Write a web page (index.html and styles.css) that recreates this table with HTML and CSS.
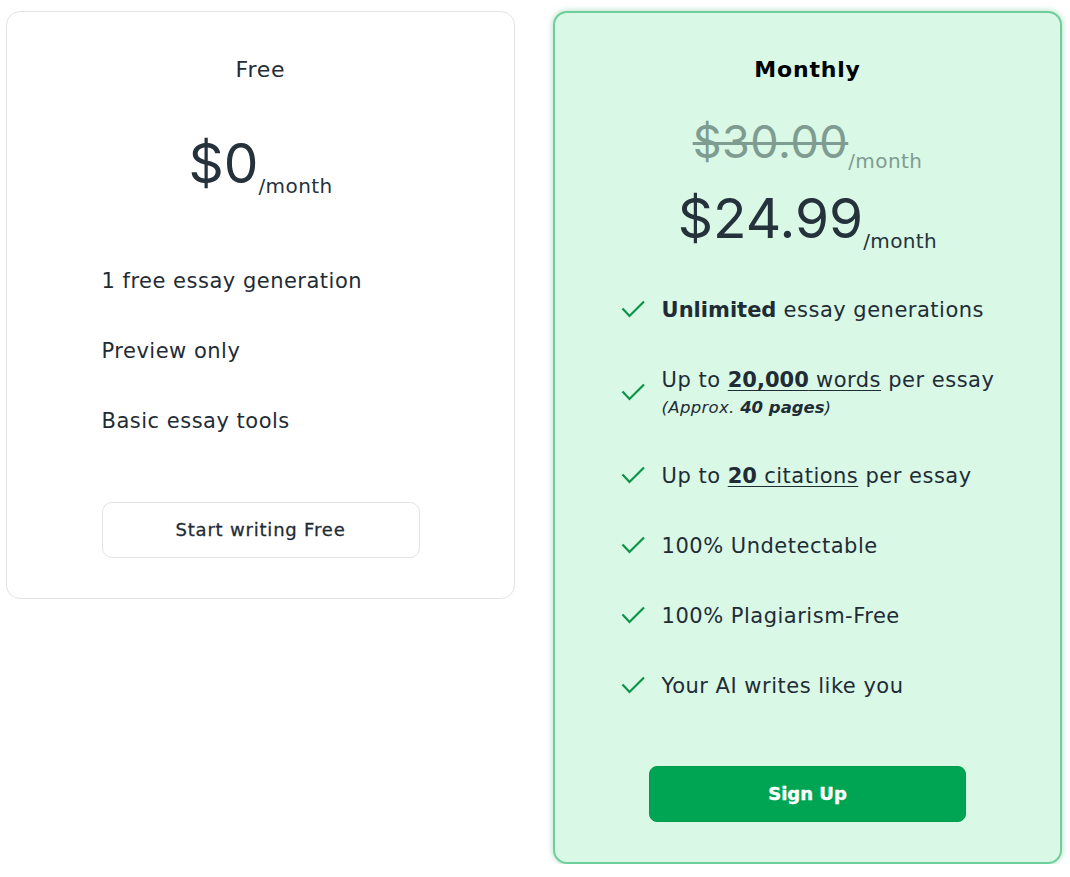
FILE: index.html
```html
<!DOCTYPE html>
<html lang="en">
<head>
  <meta charset="UTF-8">
  <meta name="viewport" content="width=device-width, initial-scale=1.0">
  <title>Pricing</title>
  <link rel="stylesheet" href="styles.css">
</head>
<body>
  <div id="plans">
    <!-- Free plan -->
    <div class="plan plan-free">
      <h3 class="plan-name">Free</h3>
      <p class="price">$0<span class="per">/month</span></p>
      <div class="plan-body">
        <ul class="features">
          <li>1 free essay generation</li>
          <li>Preview only</li>
          <li>Basic essay tools</li>
        </ul>
        <a class="plan-button" href="#">Start writing Free</a>
      </div>
    </div>

    <!-- Monthly plan -->
    <div class="plan plan-monthly">
      <h3 class="plan-name">Monthly</h3>
      <p class="price price-old">$30.00<span class="per">/month</span></p>
      <p class="price">$24.99<span class="per">/month</span></p>
      <ul class="features checks">
        <li>
          <svg class="check" viewBox="0 0 24 24"><polyline points="1.5 10.5 8.5 18 23 3.5"/></svg>
          <div><b>Unlimited</b> essay generations</div>
        </li>
        <li>
          <svg class="check" viewBox="0 0 24 24"><polyline points="1.5 10.5 8.5 18 23 3.5"/></svg>
          <div>
            Up to <u><b>20,000</b> words</u> per essay
            <span class="note">(Approx. <b>40 pages</b>)</span>
          </div>
        </li>
        <li>
          <svg class="check" viewBox="0 0 24 24"><polyline points="1.5 10.5 8.5 18 23 3.5"/></svg>
          <div>Up to <u><b>20</b> citations</u> per essay</div>
        </li>
        <li>
          <svg class="check" viewBox="0 0 24 24"><polyline points="1.5 10.5 8.5 18 23 3.5"/></svg>
          <div>100% Undetectable</div>
        </li>
        <li>
          <svg class="check" viewBox="0 0 24 24"><polyline points="1.5 10.5 8.5 18 23 3.5"/></svg>
          <div>100% Plagiarism-Free</div>
        </li>
        <li>
          <svg class="check" viewBox="0 0 24 24"><polyline points="1.5 10.5 8.5 18 23 3.5"/></svg>
          <div>Your AI writes like you</div>
        </li>
      </ul>
      <a class="plan-button signup" href="#">Sign Up</a>
    </div>
  </div>
</body>
</html>
```

FILE: styles.css
```css
body {
  margin: 0;
  background-color: #fff;
  color: #1f2c36;
  font-family: "DejaVu Sans", sans-serif;
}

#plans {
  display: grid;
  grid-template-columns: 1fr 1fr;
  align-items: start;
  gap: 38px;
  padding: 11px 8px 0 6px;
}

.plan {
  display: flex;
  flex-direction: column;
  align-items: center;
  border: 1px solid #e3e3e3;
  border-radius: 14px;
  padding: 41px 0 40px;
  background-color: #fff;
}

.plan-monthly {
  border: 2px solid #6fcf9c;
  background-color: #d9f8e6;
  box-shadow: 0 0 6px rgba(60, 180, 110, 0.45);
  padding-top: 40px;
}

.plan-name {
  margin: 0;
  font-size: 22px;
  font-weight: 400;
  line-height: 34px;
  letter-spacing: 0.8px;
}

.plan-monthly .plan-name {
  font-weight: 700;
  color: #000;
}

.price {
  margin: 43px 0 0;
  font-family: Inter, sans-serif;
  font-size: 55px;
  line-height: 66px;
  color: #25323b;
}

.price .per {
  font-family: "DejaVu Sans", sans-serif;
  font-size: 20px;
  line-height: 1;
  letter-spacing: 0.4px;
  vertical-align: -10px;
}

.price-old {
  margin-top: 28px;
  font-size: 45px;
  line-height: 54px;
  letter-spacing: 0.5px;
  color: #7f9c90;
  text-decoration: line-through;
  text-decoration-thickness: 3px;
}

.price-old + .price {
  margin-top: 14px;
}

.price-old .per {
  display: inline-block;
  color: #7f9c90;
}

.plan-body {
  width: 318px;
}

.features {
  list-style: none;
  margin: 70px 0 0;
  padding: 0;
  display: flex;
  flex-direction: column;
  gap: 40px;
  font-size: 21px;
  line-height: 30px;
  letter-spacing: 0.5px;
}

.checks {
  margin-top: 44px;
}

.checks li {
  display: flex;
  align-items: center;
  gap: 17px;
}

.checks b {
  font-weight: 700;
  letter-spacing: 0;
}

.checks u {
  text-decoration-thickness: 1px;
  text-underline-offset: 3px;
}

.check {
  width: 24px;
  height: 24px;
  flex-shrink: 0;
  fill: none;
  stroke: #0b9448;
  stroke-width: 2.2;
}

.note {
  display: block;
  font-size: 16.5px;
  line-height: 26px;
  font-style: italic;
  letter-spacing: 0.3px;
}

.plan-button {
  display: block;
  box-sizing: border-box;
  width: 318px;
  height: 56px;
  margin-top: 66px;
  border: 1px solid #e4e4e4;
  border-radius: 10px;
  color: #1f2c36;
  font-size: 18px;
  line-height: 54px;
  letter-spacing: 0.8px;
  text-align: center;
  text-decoration: none;
  -webkit-text-stroke: 0.3px #1f2c36;
}

.signup {
  width: 317px;
  margin-top: 65px;
  border-color: #0a9a4e;
  border-radius: 8px;
  background-color: #00a553;
  color: #fff;
  font-size: 18px;
  font-weight: 700;
  letter-spacing: 0;
  -webkit-text-stroke: 0.4px #fff;
}
```
